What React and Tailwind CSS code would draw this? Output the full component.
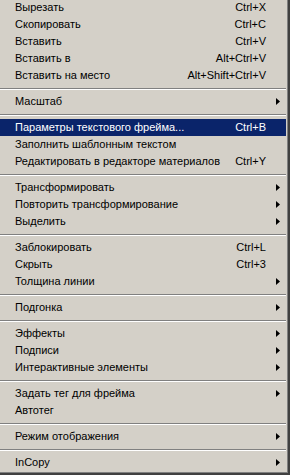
const MENU = [
  [
    { label: "Вырезать", key: "Ctrl+X" },
    { label: "Скопировать", key: "Ctrl+C" },
    { label: "Вставить", key: "Ctrl+V" },
    { label: "Вставить в", key: "Alt+Ctrl+V" },
    { label: "Вставить на место", key: "Alt+Shift+Ctrl+V" },
  ],
  [{ label: "Масштаб", sub: true }],
  [
    { label: "Параметры текстового фрейма...", key: "Ctrl+B", active: true },
    { label: "Заполнить шаблонным текстом" },
    { label: "Редактировать в редакторе материалов", key: "Ctrl+Y" },
  ],
  [
    { label: "Трансформировать", sub: true },
    { label: "Повторить трансформирование", sub: true },
    { label: "Выделить", sub: true },
  ],
  [
    { label: "Заблокировать", key: "Ctrl+L" },
    { label: "Скрыть", key: "Ctrl+3" },
    { label: "Толщина линии", sub: true },
  ],
  [{ label: "Подгонка", sub: true }],
  [
    { label: "Эффекты", sub: true },
    { label: "Подписи", sub: true },
    { label: "Интерактивные элементы", sub: true },
  ],
  [
    { label: "Задать тег для фрейма", sub: true },
    { label: "Автотег" },
  ],
  [{ label: "Режим отображения", sub: true }],
  [{ label: "InCopy", sub: true }],
];

function Arrow({ active }) {
  return (
    <svg width="4" height="7" viewBox="0 0 4 7" className="block">
      <path d="M0 0 L4 3.5 L0 7 Z" fill={active ? "#ffffff" : "#000000"} />
    </svg>
  );
}

function Item({ label, key: _k, shortcut, sub, active }) {
  return (
    <div
      className={`flex h-[17px] items-center pl-[15px] whitespace-nowrap ${
        active ? "bg-[#0a246a] text-white" : "text-black"
      }`}
    >
      <div className="flex-1">{label}</div>
      {shortcut && <div>{shortcut}</div>}
      <div className="w-[20px] pl-[10px] flex items-center">{sub && <Arrow active={active} />}</div>
    </div>
  );
}

function Separator() {
  return (
    <div className="h-[9px] pt-[4px]">
      <div className="h-px bg-[#808080]" />
      <div className="h-px bg-white" />
    </div>
  );
}

export default function App() {
  return (
    <div className="w-[290px] h-[475px] overflow-hidden bg-[#404040] pr-[2px] pb-[2px]">
      <div
        className="h-full bg-[#d4d0c8] border-r border-b border-[#808080] text-[11px] leading-none overflow-hidden"
        style={{ fontFamily: '"Liberation Sans", Arial, sans-serif' }}
      >
        <div className="-mt-px pr-px">
          {MENU.map((group, gi) => (
            <div key={gi}>
              {gi > 0 && <Separator />}
              {group.map((it) => (
                <Item key={it.label} label={it.label} shortcut={it.key} sub={it.sub} active={it.active} />
              ))}
            </div>
          ))}
        </div>
      </div>
    </div>
  );
}
